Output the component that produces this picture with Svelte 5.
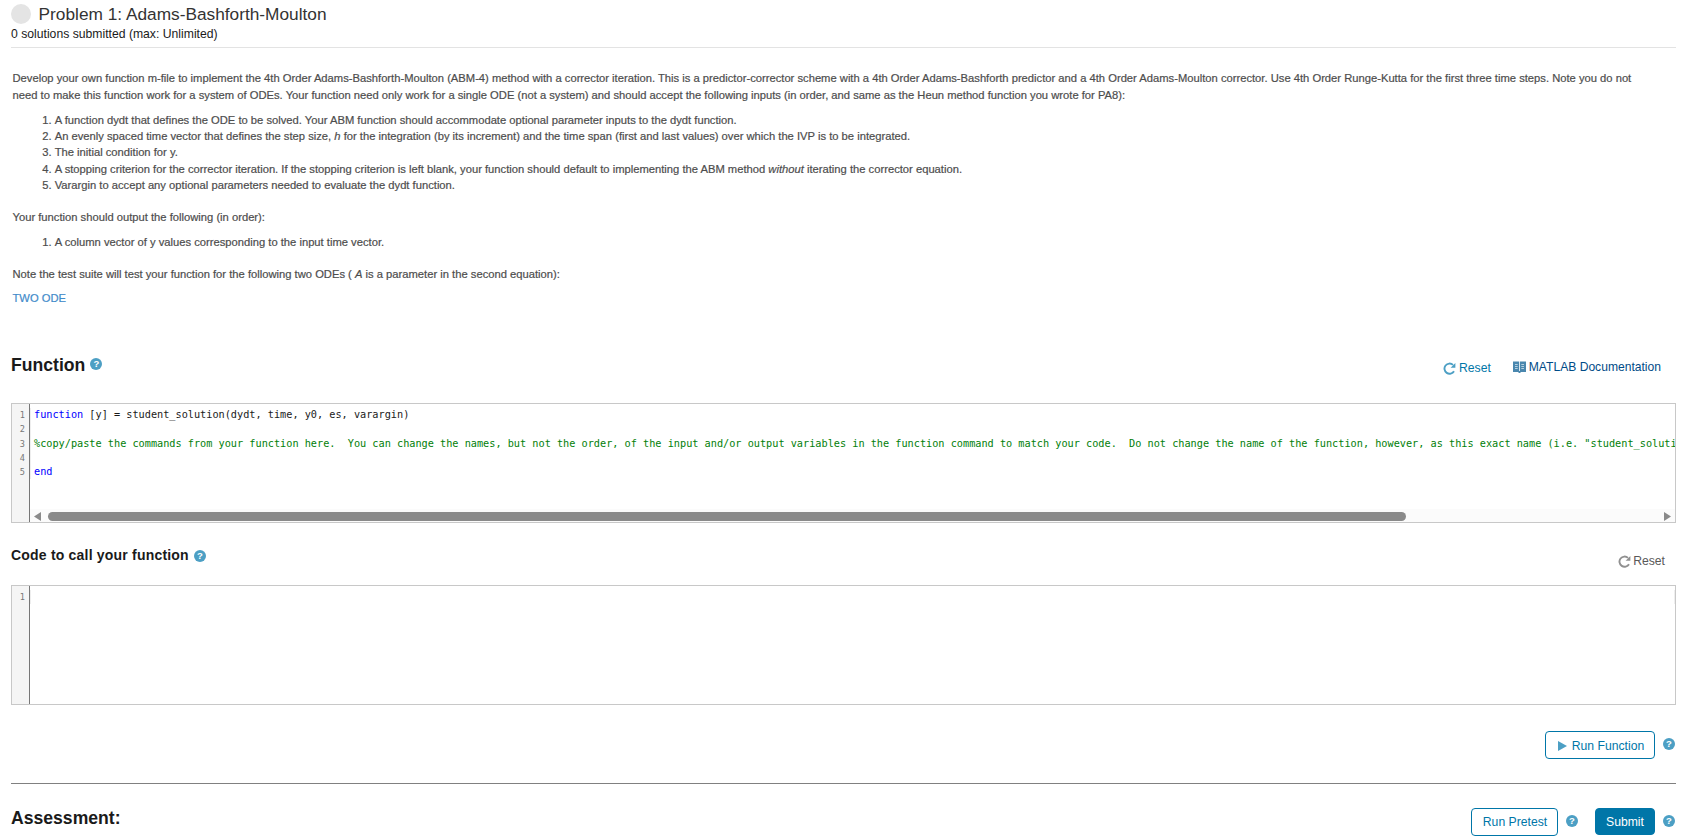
<script>
    export let title = "Problem 1: Adams-Bashforth-Moulton";
    export let submitted = "0 solutions submitted (max: Unlimited)";

    const codeLines = [
        [
            { kind: "keyword", text: "function" },
            { kind: "plain", text: " [y] = student_solution(dydt, time, y0, es, varargin)" },
        ],
        [],
        [
            {
                kind: "comment",
                text: '%copy/paste the commands from your function here.  You can change the names, but not the order, of the input and/or output variables in the function command to match your code.  Do not change the name of the function, however, as this exact name (i.e. "student_soluti',
            },
        ],
        [],
        [{ kind: "keyword", text: "end" }],
    ];
</script>

{#snippet help()}
    <span class="help">?</span>
{/snippet}

{#snippet resetIcon()}
    <svg class="reset-icon" viewBox="0 0 13 13" width="13" height="13">
        <path d="M11 9.2A5.1 5.1 0 1 1 10 2.9" fill="none" stroke="currentColor" stroke-width="1.9" />
        <path d="M12.4 .9V5.8H7.6Z" fill="currentColor" />
    </svg>
{/snippet}

<div class="page">
    <header>
        <div class="title-row">
            <span class="status"></span>
            <h1>{title}</h1>
        </div>
        <div class="submitted">{submitted}</div>
    </header>

    <section class="description">
        <p>
            Develop your own function m-file to implement the 4th Order Adams-Bashforth-Moulton (ABM-4) method with a corrector iteration. This is a predictor-corrector scheme with a 4th Order Adams-Bashforth predictor and a 4th Order Adams-Moulton corrector. Use 4th Order Runge-Kutta for the first three time steps. Note you do not<br />
            need to make this function work for a system of ODEs. Your function need only work for a single ODE (not a system) and should accept the following inputs (in order, and same as the Heun method function you wrote for PA8):
        </p>
        <ol>
            <li>A function dydt that defines the ODE to be solved. Your ABM function should accommodate optional parameter inputs to the dydt function.</li>
            <li>An evenly spaced time vector that defines the step size, <em>h</em> for the integration (by its increment) and the time span (first and last values) over which the IVP is to be integrated.</li>
            <li>The initial condition for y.</li>
            <li>A stopping criterion for the corrector iteration. If the stopping criterion is left blank, your function should default to implementing the ABM method <em>without</em> iterating the corrector equation.</li>
            <li>Varargin to accept any optional parameters needed to evaluate the dydt function.</li>
        </ol>
        <p>Your function should output the following (in order):</p>
        <ol>
            <li>A column vector of y values corresponding to the input time vector.</li>
        </ol>
        <p>Note the test suite will test your function for the following two ODEs ( <em>A</em> is a parameter in the second equation):</p>
        <p class="ode"><span class="link">TWO ODE</span></p>
    </section>

    <div class="function-head">
        <h2>Function</h2>
        {@render help()}
        <div class="actions">
            <span class="reset">{@render resetIcon()}Reset</span>
            <span class="docs">
                <svg viewBox="0 0 13 12" width="13" height="12">
                    <path d="M0 .5H6.1V11H0ZM6.9 .5H13V11H6.9ZM5.5 10H7.5V12H5.5Z" fill="#4a87ae" />
                    <path d="M2 3.5H4.7M2 5.5H4.7M2 7.5H4.7M8.3 3.5H11M8.3 5.5H11M8.3 7.5H11" stroke="#c3d8e5" stroke-width=".9" />
                </svg>
                MATLAB Documentation
            </span>
        </div>
    </div>

    <div class="editor">
        <div class="gutter">
            {#each codeLines as _, i}
                <div>{i + 1}</div>
            {/each}
        </div>
        <div class="code-area">
            <div class="code">
                {#each codeLines as line}
                    <div class="line">{#each line as token}<span class={token.kind}>{token.text}</span>{/each}</div>
                {/each}
            </div>
            <div class="scrollbar">
                <svg viewBox="0 0 7 9" width="7" height="9"><path d="M7 0V9L0 4.5Z" /></svg>
                <div class="track"><div class="thumb"></div></div>
                <svg viewBox="0 0 7 9" width="7" height="9"><path d="M0 0V9L7 4.5Z" /></svg>
            </div>
        </div>
    </div>

    <div class="call-head">
        <h3>Code to call your function</h3>
        {@render help()}
        <span class="reset disabled">{@render resetIcon()}Reset</span>
    </div>

    <div class="editor">
        <div class="gutter"><div>1</div></div>
        <div class="code-area">
            <div class="code empty"><div class="line"></div></div>
        </div>
    </div>

    <div class="run-row">
        <button class="run">
            <svg viewBox="0 0 9 10" width="9" height="10"><path d="M0 0V10L9 5Z" fill="#4c9fc4" /></svg>
            Run Function
        </button>
        {@render help()}
    </div>

    <div class="assessment">
        <h2>Assessment:</h2>
        <button class="pretest">Run Pretest</button>
        {@render help()}
        <button class="submit">Submit</button>
        {@render help()}
    </div>
</div>

<style>
    :global(body) {
        background: #fff;
        overflow: hidden;
    }
    .page {
        box-sizing: border-box;
        height: 838px;
        padding: 0 8px 0 11px;
        overflow: hidden;
        font-family: "Liberation Sans", Arial, sans-serif;
        font-size: 12.2px;
        line-height: 16px;
        color: #1a1a1a;
    }
    h1, h2, h3, p, ol {
        margin: 0;
    }
    svg {
        display: block;
        flex: none;
    }
    header {
        padding-bottom: 7px;
        border-bottom: 1px solid #e3e3e3;
    }
    .title-row {
        display: flex;
        align-items: center;
        height: 28px;
    }
    .status {
        width: 20px;
        height: 20px;
        margin-right: 7.6px;
        border-radius: 50%;
        background: #e4e4e4;
    }
    h1 {
        font-size: 17.27px;
        font-weight: 400;
        line-height: 28px;
        color: #333;
    }
    .submitted {
        line-height: 12px;
    }
    .description {
        height: 237px;
        padding: 22px 0 0 1.5px;
        font-size: 11.21px;
        line-height: 17px;
        color: #4d4d4d;
        white-space: nowrap;
        -webkit-text-stroke: 0.2px;
    }
    .description ol {
        padding-left: 42.2px;
        margin: 8px 0 16px;
        line-height: 16.24px;
    }
    .description .ode {
        margin-top: 7px;
    }
    .link {
        color: #428bca;
    }
    .help {
        display: flex;
        align-items: center;
        justify-content: center;
        flex: none;
        width: 12px;
        height: 12px;
        border-radius: 50%;
        background: #4c9fc4;
        color: #fff;
        font-size: 9.5px;
        font-weight: 700;
        line-height: 12px;
    }
    .function-head {
        display: flex;
        align-items: flex-start;
        box-sizing: border-box;
        height: 96px;
        padding-top: 48px;
    }
    h2 {
        font-size: 17.6px;
        line-height: 20px;
    }
    .function-head .help {
        margin: 2.5px 0 0 5px;
    }
    .actions {
        display: flex;
        gap: 22px;
        margin: 4px 15px 0 auto;
    }
    .reset {
        display: flex;
        align-items: center;
        gap: 2.5px;
        margin-top: 1px;
        color: #0076a8;
    }
    .reset-icon {
        color: #4c9fc4;
    }
    .docs {
        display: flex;
        align-items: center;
        align-self: flex-start;
        gap: 3px;
        font-size: 12.1px;
        color: #004b87;
    }
    .editor {
        display: flex;
        box-sizing: border-box;
        height: 120px;
        border: 1px solid #c8c8c8;
        font-family: "DejaVu Sans Mono", monospace;
    }
    .gutter {
        box-sizing: border-box;
        flex: none;
        width: 18px;
        padding: 4px 4px 0 0;
        border-right: 1px solid #777;
        background: #f5f5f5;
        color: #777;
        font-size: 8.6px;
        line-height: 14.3px;
        text-align: right;
    }
    .code-area {
        display: flex;
        flex-direction: column;
        justify-content: space-between;
        flex: 1;
        min-width: 0;
        padding-top: 4px;
        overflow: hidden;
    }
    .code {
        padding-left: 3px;
        border-left: 1px solid #eee;
        font-size: 10.235px;
        line-height: 14.4px;
        white-space: pre;
    }
    .code.empty {
        border-right: 1px solid #eee;
    }
    .line {
        height: 14.3px;
    }
    .keyword {
        color: #00f;
    }
    .plain {
        color: #1a1a1a;
    }
    .comment {
        color: #028009;
    }
    .scrollbar {
        display: flex;
        align-items: center;
        gap: 7px;
        height: 11px;
        padding: 2px 4px 0;
        background: #fbfbfb;
    }
    .scrollbar svg {
        fill: #8a8a8a;
    }
    .track {
        flex: 1;
    }
    .thumb {
        width: 1358px;
        height: 9px;
        border-radius: 5px;
        background: #8a8a8a;
    }
    .call-head {
        display: flex;
        align-items: flex-start;
        box-sizing: border-box;
        height: 62px;
        padding-top: 23px;
    }
    h3 {
        font-size: 14px;
        letter-spacing: 0.2px;
        line-height: 18px;
    }
    .call-head .help {
        margin: 3.5px 0 0 5px;
    }
    .call-head .reset {
        margin: 7px 11px 0 auto;
    }
    .disabled {
        color: #595959;
    }
    .disabled .reset-icon {
        color: #909090;
    }
    .run-row {
        display: flex;
        align-items: flex-start;
        justify-content: flex-end;
        box-sizing: border-box;
        height: 79px;
        padding: 26px 1px 0 0;
        border-bottom: 1px solid #808080;
    }
    button {
        display: flex;
        align-items: center;
        justify-content: center;
        box-sizing: border-box;
        width: 110px;
        height: 28px;
        padding: 0;
        border: 1px solid #0076a8;
        border-radius: 4px;
        background: #fff;
        color: #0076a8;
        font: 12.2px "Liberation Sans", Arial, sans-serif;
    }
    .run {
        gap: 5px;
        padding: 1px 0 0 2px;
    }
    .run-row .help, .assessment .help {
        margin: 7px 0 0 8px;
    }
    .assessment {
        display: flex;
        align-items: flex-start;
        padding: 24px 1px 0 0;
    }
    .pretest {
        width: 87px;
        margin-left: auto;
        padding-left: 1px;
    }
    .submit {
        width: 60px;
        height: 27px;
        margin-left: 17px;
        background: #0076a8;
        color: #fff;
    }
</style>
